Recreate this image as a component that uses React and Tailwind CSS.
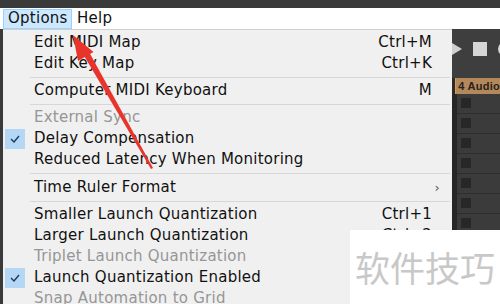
import React from 'react';

const font = { fontFamily: '"DejaVu Sans", "Liberation Sans", sans-serif' };

const items = [
  { label: 'Edit MIDI Map', shortcut: 'Ctrl+M' },
  { label: 'Edit Key Map', shortcut: 'Ctrl+K' },
  { sep: 'h-[6px]' },
  { label: 'Computer MIDI Keyboard', shortcut: 'M' },
  { sep: 'h-[6px]' },
  { label: 'External Sync', disabled: true },
  { label: 'Delay Compensation', checked: true },
  { label: 'Reduced Latency When Monitoring' },
  { sep: 'h-[7px]' },
  { label: 'Time Ruler Format', submenu: true },
  { sep: 'h-[6px]' },
  { label: 'Smaller Launch Quantization', shortcut: 'Ctrl+1' },
  { label: 'Larger Launch Quantization', shortcut: 'Ctrl+2' },
  { label: 'Triplet Launch Quantization', disabled: true },
  { label: 'Launch Quantization Enabled', checked: true },
  { label: 'Snap Automation to Grid', disabled: true },
];

function MenuRow({ item }) {
  if (item.sep) {
    return (
      <div className={`${item.sep} flex items-center`}>
        <div className="ml-[27px] mr-[2px] flex-1 h-px bg-[#d7d7d7]" />
      </div>
    );
  }
  return (
    <div className={`h-[21px] flex items-center ${item.disabled ? 'text-[#969696]' : 'text-[#111]'}`}>
      <div className="w-[31px] h-full flex items-center">
        {item.checked && (
          <div className="ml-[2px] w-[20px] h-[20px] bg-[#b3d7f5] flex items-center justify-center">
            <svg width="10" height="8" viewBox="0 0 10 8">
              <path d="M1 4 L4 7 L9 1" fill="none" stroke="#1e3b5e" strokeWidth="1.4" />
            </svg>
          </div>
        )}
      </div>
      <span className="flex-1 whitespace-nowrap">{item.label}</span>
      {item.shortcut && <span className="pr-[20px]">{item.shortcut}</span>}
      {item.submenu && <span className="pr-[12px] text-[13px] text-[#555]">›</span>}
    </div>
  );
}

function RightPanel() {
  const rows = [0, 1, 2, 3, 4, 5, 6, 7, 8, 9, 10];
  return (
    <div className="flex-1 flex flex-col bg-[#2c2c2c] overflow-hidden">
      <div className="h-[49px] shrink-0 bg-[#3e3e3e] flex items-start gap-[11px] pt-[13px]">
        <svg width="10" height="12" viewBox="0 0 10 12" className="shrink-0 mt-[1px]">
          <path d="M0 0 L10 6 L0 12 Z" fill="#cfcfcf" />
        </svg>
        <div className="w-[14px] h-[14px] bg-[#d6d6d6] shrink-0" />
        <div className="w-[14px] h-[14px] rounded-full bg-[#d6d6d6] shrink-0" />
      </div>
      <div className="h-[16px] shrink-0 flex">
        <div className="w-[4px] bg-[#2a2a2a]" />
        <div className="flex-1 bg-[#b3885c] border-l border-[#d89a50] text-[11px] font-bold text-[#2a2218] pl-[2px] leading-[16px] whitespace-nowrap" style={{ fontFamily: '"Liberation Sans", sans-serif' }}>
          4 Audio
        </div>
      </div>
      {rows.map((r) => (
        <div key={r} className="h-[20px] flex shrink-0">
          <div className="w-[5px] bg-[#262626]" />
          <div className="flex-1 bg-[#3b3b3b] border-b border-[#2d2d2d] pl-[4px] pt-[4px]">
            <div className="w-[10px] h-[10px] bg-[#272727]" />
          </div>
        </div>
      ))}
    </div>
  );
}

export default function App() {
  return (
    <div className="w-[500px] h-[304px] relative overflow-hidden bg-[#2c2c2c] text-[15px] tracking-[0.25px]" style={font}>
      <div className="h-[8px] bg-[#3a3a3a]" />
      <div className="h-[21px] bg-white flex items-center">
        <div className="ml-[3px] w-[69px] h-[20px] bg-[#cce8ff] border border-[#99d1ff] flex items-center pl-[4px] text-[#111]">
          Options
        </div>
        <div className="ml-[5px] text-[#111]">Help</div>
      </div>
      <div className="flex h-[275px]">
        <div className="w-[3px] bg-[#3a3a3a]" />
        <div className="w-[449px] bg-[#f0f0f0] border-t border-[#d0d0d0] pt-[2px]">
          {items.map((item, i) => (
            <MenuRow key={i} item={item} />
          ))}
        </div>
        <RightPanel />
      </div>

      {/* watermark */}
      <div className="absolute left-[350px] top-[230px] w-[150px] h-[74px] bg-white flex items-center justify-center">
        <span className="text-[35px] text-[#c8c8c8] tracking-[0px]" style={{ fontFamily: '"Noto Sans CJK SC", sans-serif' }}>
          软件技巧
        </span>
      </div>

      {/* red arrow */}
      <svg className="absolute inset-0 pointer-events-none" width="500" height="304" viewBox="0 0 500 304">
        <path d="M73 35 L93.5 52 L78 61 Z" fill="#e8342a" />
        <path d="M83 54 L88.5 51 L153 168 L151 169 Z" fill="#e8342a" />
      </svg>
    </div>
  );
}
